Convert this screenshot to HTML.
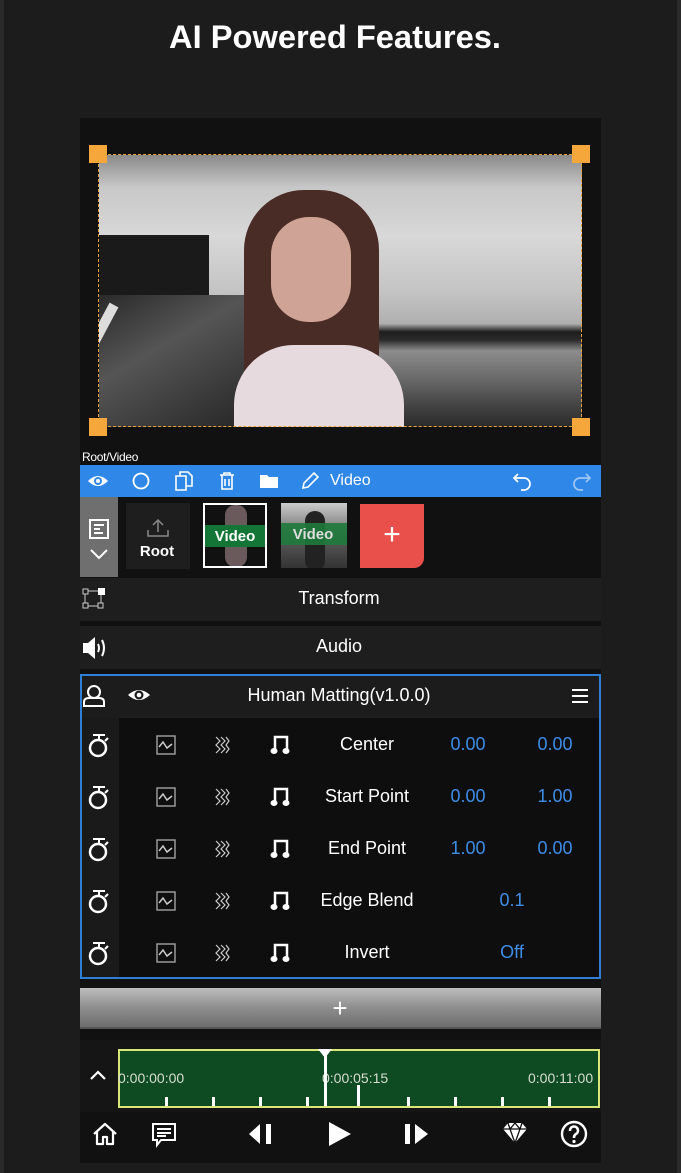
<!DOCTYPE html>
<html><head><meta charset="utf-8"><style>
*{margin:0;padding:0;box-sizing:border-box}
body{width:681px;height:1173px;background:#1c1c1c;position:relative;overflow:hidden;font-family:"Liberation Sans",sans-serif;color:#fff}
.a{position:absolute}
.t{position:absolute;white-space:nowrap}
.c{transform:translateX(-50%)}
svg{position:absolute;overflow:visible}
.blue{color:#3d8de6}
</style></head><body>
<div class="a" style="left:0;top:0;width:4px;height:1173px;background:#2a2a2a"></div>
<div class="a" style="right:0;top:0;width:4px;height:1173px;background:#2a2a2a"></div>
<div class="t c" style="left:335px;top:19px;font-size:32px;font-weight:bold;transform:translateX(-50%) scaleX(1.02)">AI Powered Features.</div>

<!-- app panel -->
<div class="a" style="left:80px;top:118px;width:521px;height:1045px;background:#111"></div>

<!-- photo -->
<div class="a" style="left:99px;top:155px;width:483px;height:272px;overflow:hidden;background:linear-gradient(#8a8a8a 0%,#c8c8c8 12%,#d8d8d8 30%,#c4c4c4 50%,#b0b0b0 62%,#1e1e1e 65%,#2a2a2a 68%,#8c8c8c 72%,#6a6a6a 82%,#444 92%,#2a2a2a 100%)">
  <div class="a" style="left:0;top:80px;width:110px;height:70px;background:#1a1a1a"></div>
  <div class="a" style="left:0;top:140px;width:150px;height:132px;background:linear-gradient(150deg,#2a2a2a,#555 40%,#262626)"></div>
  <div class="a" style="left:10px;top:150px;width:10px;height:130px;background:#ddd;transform:rotate(28deg);transform-origin:top"></div>
  <div class="a" style="left:145px;top:35px;width:135px;height:210px;border-radius:60px 60px 25px 25px;background:#4a2c26"></div>
  <div class="a" style="left:172px;top:62px;width:80px;height:105px;border-radius:38px;background:#cfa395"></div>
  <div class="a" style="left:135px;top:190px;width:170px;height:100px;border-radius:60px 60px 0 0;background:#e6dadf"></div>
</div>
<div class="a" style="left:98px;top:154px;width:484px;height:273px;border:1px dashed #e8a23a"></div>
<div class="a" style="left:89px;top:145px;width:18px;height:18px;background:#f5a73c"></div>
<div class="a" style="left:572px;top:145px;width:18px;height:18px;background:#f5a73c"></div>
<div class="a" style="left:89px;top:418px;width:18px;height:18px;background:#f5a73c"></div>
<div class="a" style="left:572px;top:418px;width:18px;height:18px;background:#f5a73c"></div>

<div class="t" style="left:82px;top:450px;font-size:12px;letter-spacing:-0.3px">Root/Video</div>

<!-- blue toolbar -->
<div class="a" style="left:80px;top:465px;width:521px;height:32px;background:#2f87e8"></div>
<svg style="left:86px;top:471px" width="24" height="20" viewBox="0 0 24 20"><path d="M2 10Q12 0 22 10Q12 20 2 10Z" fill="#fff"/><circle cx="12" cy="10" r="4" fill="#2f87e8"/><circle cx="12" cy="10" r="2" fill="#fff"/></svg>
<svg style="left:132px;top:472px" width="18" height="18"><circle cx="9" cy="9" r="7.5" fill="none" stroke="#fff" stroke-width="1.8"/></svg>
<svg style="left:174px;top:470px" width="20" height="22"><path d="M2 6h10v14H2z M6 6V2h8l4 4v10h-6" fill="none" stroke="#fff" stroke-width="1.6"/></svg>
<svg style="left:218px;top:471px" width="18" height="20"><path d="M2 4h14 M6 4V2h6v2 M4 4v14h10V4 M7 8v7 M11 8v7" fill="none" stroke="#fff" stroke-width="1.6"/></svg>
<svg style="left:259px;top:473px" width="20" height="16"><path d="M1 2h7l2 2h9v11H1z" fill="#fff"/></svg>
<svg style="left:300px;top:471px" width="20" height="20"><path d="M3 17l1-5L14 2l4 4L8 16z" fill="none" stroke="#fff" stroke-width="1.6"/></svg>
<div class="t" style="left:330px;top:472px;font-size:16px">Video</div>
<svg style="left:512px;top:470px" width="22" height="22"><path d="M6 4L2 8l4 4 M2 8h10a6 6 0 0 1 0 12h-3" fill="none" stroke="#fff" stroke-width="1.7"/></svg>
<svg style="left:570px;top:470px" width="22" height="22"><path d="M16 4l4 4-4 4 M20 8H10a6 6 0 0 0 0 12h3" fill="none" stroke="#9cc6f3" stroke-width="1.7"/></svg>

<!-- clip row -->
<div class="a" style="left:80px;top:497px;width:38px;height:80px;background:#6f6f6f"></div>
<svg style="left:89px;top:519px" width="20" height="20"><rect x="1" y="1" width="18" height="18" fill="none" stroke="#fff" stroke-width="2"/><path d="M5 6h10M5 10h6M5 14h9" stroke="#fff" stroke-width="2"/></svg>
<svg style="left:89px;top:548px" width="20" height="12"><path d="M2 2l8 8 8-8" fill="none" stroke="#fff" stroke-width="2"/></svg>
<div class="a" style="left:126px;top:503px;width:64px;height:66px;background:#1e1e1e"></div>
<svg style="left:146px;top:518px" width="24" height="20"><path d="M12 14V2 M7 7l5-5 5 5 M2 12v6h20v-6" fill="none" stroke="#888" stroke-width="1.5"/></svg>
<div class="t c" style="left:157px;top:543px;font-size:15px;font-weight:bold">Root</div>
<div class="a" style="left:203px;top:503px;width:64px;height:65px;border:2px solid #fff;background:#111;overflow:hidden">
  <div class="a" style="left:20px;top:0;width:22px;height:62px;border-radius:10px;background:#6a5a5c"></div>
  <div class="a" style="left:0;top:20px;width:62px;height:22px;background:#137636"></div>
  <div class="t c" style="left:30px;top:23px;font-size:15px;font-weight:bold">Video</div>
</div>
<div class="a" style="left:281px;top:503px;width:66px;height:65px;background:linear-gradient(#ccc,#555 60%,#333);overflow:hidden">
  <div class="a" style="left:24px;top:8px;width:20px;height:60px;border-radius:10px;background:#222"></div>
  <div class="a" style="left:0;top:20px;width:66px;height:22px;background:#1e7a3c;opacity:.9"></div>
  <div class="t c" style="left:32px;top:23px;font-size:15px;font-weight:bold;color:#ddd">Video</div>
</div>
<div class="a" style="left:360px;top:504px;width:64px;height:64px;background:#e9504c;border-radius:0 0 10px 0"></div>
<div class="t c" style="left:392px;top:518px;font-size:30px;font-weight:300">+</div>

<!-- transform / audio -->
<div class="a" style="left:80px;top:578px;width:521px;height:43px;background:#1e1e1e"></div>
<svg style="left:82px;top:587px" width="24" height="24"><rect x="16" y="1" width="7" height="7" fill="#fff"/><rect x="1" y="2" width="5" height="5" fill="none" stroke="#ccc"/><rect x="1" y="16" width="5" height="5" fill="none" stroke="#ccc"/><rect x="16" y="16" width="5" height="5" fill="none" stroke="#ccc"/><path d="M6 4h10M3 7v9M19 8v8M6 19h10" stroke="#ccc"/></svg>
<div class="t c" style="left:339px;top:588px;font-size:18px">Transform</div>
<div class="a" style="left:80px;top:626px;width:521px;height:43px;background:#1e1e1e"></div>
<svg style="left:82px;top:636px" width="26" height="24"><path d="M1 7h5l7-6v22l-7-6H1z" fill="#fff"/><path d="M16 8q2 4 0 8 M20 4q4 8 0 16" fill="none" stroke="#fff" stroke-width="2"/></svg>
<div class="t c" style="left:339px;top:636px;font-size:18px">Audio</div>

<!-- human matting -->
<div class="a" style="left:80px;top:674px;width:521px;height:305px;border:2px solid #2f7fd6;background:#0e0e0e"></div>
<div class="a" style="left:82px;top:676px;width:517px;height:42px;background:#1c1c1c"></div>
<div class="a" style="left:82px;top:718px;width:37px;height:259px;background:#1a1a1a"></div>
<svg style="left:82px;top:684px" width="24" height="24"><circle cx="12" cy="8" r="6" fill="none" stroke="#fff" stroke-width="2"/><path d="M2 22v-4q0-4 5-4h10q5 0 5 4v4z" fill="none" stroke="#fff" stroke-width="2"/></svg>
<svg style="left:126px;top:686px" width="26" height="18"><path d="M2 9Q13 -1 24 9Q13 19 2 9Z" fill="#fff"/><circle cx="13" cy="9" r="4.5" fill="#1c1c1c"/><circle cx="13" cy="9" r="2.3" fill="#fff"/></svg>
<div class="t c" style="left:339px;top:685px;font-size:18px">Human Matting(v1.0.0)</div>
<svg style="left:571px;top:688px" width="18" height="16"><path d="M1 2h16M1 8h16M1 14h16" stroke="#fff" stroke-width="2"/></svg>

<svg style="left:88px;top:733px" width="22" height="26"><path d="M5 2h12 M11 3v3" stroke="#fff" stroke-width="2"/><circle cx="10" cy="15" r="8" fill="none" stroke="#fff" stroke-width="2.5"/><path d="M17 8l3-3" stroke="#fff" stroke-width="2"/></svg>
<svg style="left:156px;top:735px" width="20" height="20"><rect x="1" y="1" width="18" height="18" fill="none" stroke="#999" stroke-width="1.5"/><path d="M3 12l4-5 4 6 5-4" fill="none" stroke="#ccc" stroke-width="1.5"/></svg>
<svg style="left:214px;top:735px" width="16" height="20"><path d="M2 2l4 4-4 4 4 4-4 4 M7 2l4 4-4 4 4 4-4 4 M12 2l3 4-3 4 3 4-3 4" fill="none" stroke="#ccc" stroke-width="1.2"/></svg>
<svg style="left:270px;top:734px" width="20" height="22"><path d="M5 17V3h12v14" fill="none" stroke="#fff" stroke-width="2.5"/><ellipse cx="4" cy="17" rx="3.5" ry="3" fill="#fff"/><ellipse cx="16" cy="17" rx="3.5" ry="3" fill="#fff"/></svg>
<div class="t c" style="left:367px;top:734px;font-size:18px">Center</div>
<div class="t c blue" style="left:468px;top:734px;font-size:18px">0.00</div>
<div class="t c blue" style="left:555px;top:734px;font-size:18px">0.00</div>

<svg style="left:88px;top:785px" width="22" height="26"><path d="M5 2h12 M11 3v3" stroke="#fff" stroke-width="2"/><circle cx="10" cy="15" r="8" fill="none" stroke="#fff" stroke-width="2.5"/><path d="M17 8l3-3" stroke="#fff" stroke-width="2"/></svg>
<svg style="left:156px;top:787px" width="20" height="20"><rect x="1" y="1" width="18" height="18" fill="none" stroke="#999" stroke-width="1.5"/><path d="M3 12l4-5 4 6 5-4" fill="none" stroke="#ccc" stroke-width="1.5"/></svg>
<svg style="left:214px;top:787px" width="16" height="20"><path d="M2 2l4 4-4 4 4 4-4 4 M7 2l4 4-4 4 4 4-4 4 M12 2l3 4-3 4 3 4-3 4" fill="none" stroke="#ccc" stroke-width="1.2"/></svg>
<svg style="left:270px;top:786px" width="20" height="22"><path d="M5 17V3h12v14" fill="none" stroke="#fff" stroke-width="2.5"/><ellipse cx="4" cy="17" rx="3.5" ry="3" fill="#fff"/><ellipse cx="16" cy="17" rx="3.5" ry="3" fill="#fff"/></svg>
<div class="t c" style="left:367px;top:786px;font-size:18px">Start Point</div>
<div class="t c blue" style="left:468px;top:786px;font-size:18px">0.00</div>
<div class="t c blue" style="left:555px;top:786px;font-size:18px">1.00</div>

<svg style="left:88px;top:837px" width="22" height="26"><path d="M5 2h12 M11 3v3" stroke="#fff" stroke-width="2"/><circle cx="10" cy="15" r="8" fill="none" stroke="#fff" stroke-width="2.5"/><path d="M17 8l3-3" stroke="#fff" stroke-width="2"/></svg>
<svg style="left:156px;top:839px" width="20" height="20"><rect x="1" y="1" width="18" height="18" fill="none" stroke="#999" stroke-width="1.5"/><path d="M3 12l4-5 4 6 5-4" fill="none" stroke="#ccc" stroke-width="1.5"/></svg>
<svg style="left:214px;top:839px" width="16" height="20"><path d="M2 2l4 4-4 4 4 4-4 4 M7 2l4 4-4 4 4 4-4 4 M12 2l3 4-3 4 3 4-3 4" fill="none" stroke="#ccc" stroke-width="1.2"/></svg>
<svg style="left:270px;top:838px" width="20" height="22"><path d="M5 17V3h12v14" fill="none" stroke="#fff" stroke-width="2.5"/><ellipse cx="4" cy="17" rx="3.5" ry="3" fill="#fff"/><ellipse cx="16" cy="17" rx="3.5" ry="3" fill="#fff"/></svg>
<div class="t c" style="left:367px;top:838px;font-size:18px">End Point</div>
<div class="t c blue" style="left:468px;top:838px;font-size:18px">1.00</div>
<div class="t c blue" style="left:555px;top:838px;font-size:18px">0.00</div>

<svg style="left:88px;top:889px" width="22" height="26"><path d="M5 2h12 M11 3v3" stroke="#fff" stroke-width="2"/><circle cx="10" cy="15" r="8" fill="none" stroke="#fff" stroke-width="2.5"/><path d="M17 8l3-3" stroke="#fff" stroke-width="2"/></svg>
<svg style="left:156px;top:891px" width="20" height="20"><rect x="1" y="1" width="18" height="18" fill="none" stroke="#999" stroke-width="1.5"/><path d="M3 12l4-5 4 6 5-4" fill="none" stroke="#ccc" stroke-width="1.5"/></svg>
<svg style="left:214px;top:891px" width="16" height="20"><path d="M2 2l4 4-4 4 4 4-4 4 M7 2l4 4-4 4 4 4-4 4 M12 2l3 4-3 4 3 4-3 4" fill="none" stroke="#ccc" stroke-width="1.2"/></svg>
<svg style="left:270px;top:890px" width="20" height="22"><path d="M5 17V3h12v14" fill="none" stroke="#fff" stroke-width="2.5"/><ellipse cx="4" cy="17" rx="3.5" ry="3" fill="#fff"/><ellipse cx="16" cy="17" rx="3.5" ry="3" fill="#fff"/></svg>
<div class="t c" style="left:367px;top:890px;font-size:18px">Edge Blend</div>
<div class="t c blue" style="left:512px;top:890px;font-size:18px">0.1</div>

<svg style="left:88px;top:941px" width="22" height="26"><path d="M5 2h12 M11 3v3" stroke="#fff" stroke-width="2"/><circle cx="10" cy="15" r="8" fill="none" stroke="#fff" stroke-width="2.5"/><path d="M17 8l3-3" stroke="#fff" stroke-width="2"/></svg>
<svg style="left:156px;top:943px" width="20" height="20"><rect x="1" y="1" width="18" height="18" fill="none" stroke="#999" stroke-width="1.5"/><path d="M3 12l4-5 4 6 5-4" fill="none" stroke="#ccc" stroke-width="1.5"/></svg>
<svg style="left:214px;top:943px" width="16" height="20"><path d="M2 2l4 4-4 4 4 4-4 4 M7 2l4 4-4 4 4 4-4 4 M12 2l3 4-3 4 3 4-3 4" fill="none" stroke="#ccc" stroke-width="1.2"/></svg>
<svg style="left:270px;top:942px" width="20" height="22"><path d="M5 17V3h12v14" fill="none" stroke="#fff" stroke-width="2.5"/><ellipse cx="4" cy="17" rx="3.5" ry="3" fill="#fff"/><ellipse cx="16" cy="17" rx="3.5" ry="3" fill="#fff"/></svg>
<div class="t c" style="left:367px;top:942px;font-size:18px">Invert</div>
<div class="t c blue" style="left:512px;top:942px;font-size:18px">Off</div>

<!-- plus bar -->
<div class="a" style="left:80px;top:988px;width:521px;height:41px;background:linear-gradient(#bdbdbd,#8e8e8e 50%,#6e6e6e);border-bottom:2px solid #555"></div>
<div class="t c" style="left:340px;top:993px;font-size:26px;font-weight:300">+</div>

<!-- timeline -->
<div class="a" style="left:80px;top:1040px;width:521px;height:72px;background:#151515"></div>
<svg style="left:89px;top:1069px" width="18" height="12"><path d="M2 10l7-7 7 7" fill="none" stroke="#fff" stroke-width="2.2"/></svg>
<div class="a" style="left:118px;top:1049px;width:482px;height:59px;background:#0e4a22;border:2px solid #d8e67a"></div>
<div class="t" style="left:118px;top:1070px;font-size:14px;color:#d7ddd0">0:00:00:00</div>
<div class="t" style="left:322px;top:1070px;font-size:14px;color:#d7ddd0">0:00:05:15</div>
<div class="t" style="left:528px;top:1070px;font-size:14px;color:#d7ddd0">0:00:11:00</div>
<div class="a" style="left:324px;top:1050px;width:3px;height:56px;background:#fff"></div>
<svg style="left:318px;top:1049px" width="14" height="10"><path d="M0 0h14L7 9z" fill="#fff"/></svg>
<div class="a" style="left:357px;top:1085px;width:3px;height:21px;background:#fff"></div>
<div class="a" style="left:165px;top:1097px;width:3px;height:9px;background:#fff"></div>
<div class="a" style="left:212px;top:1097px;width:3px;height:9px;background:#fff"></div>
<div class="a" style="left:259px;top:1097px;width:3px;height:9px;background:#fff"></div>
<div class="a" style="left:306px;top:1097px;width:3px;height:9px;background:#fff"></div>
<div class="a" style="left:407px;top:1097px;width:3px;height:9px;background:#fff"></div>
<div class="a" style="left:454px;top:1097px;width:3px;height:9px;background:#fff"></div>
<div class="a" style="left:501px;top:1097px;width:3px;height:9px;background:#fff"></div>
<div class="a" style="left:548px;top:1097px;width:3px;height:9px;background:#fff"></div>

<!-- bottom bar -->
<svg style="left:92px;top:1121px" width="26" height="26"><path d="M2 13L13 3l11 10 M5 11v12h6v-7h4v7h6V11" fill="none" stroke="#fff" stroke-width="2.2" stroke-linejoin="round"/></svg>
<svg style="left:151px;top:1122px" width="26" height="26"><path d="M2 2h22v16H10l-4 5v-5H2z" fill="none" stroke="#fff" stroke-width="2"/><path d="M6 7h14M6 11h14M6 14h9" stroke="#fff" stroke-width="2"/></svg>
<svg style="left:247px;top:1122px" width="30" height="24"><path d="M2 12L13 2v20z" fill="#fff"/><rect x="19" y="2" width="5" height="20" fill="#fff"/></svg>
<svg style="left:327px;top:1120px" width="26" height="28"><path d="M2 2l22 12L2 26z" fill="#fff"/></svg>
<svg style="left:403px;top:1122px" width="30" height="24"><rect x="2" y="2" width="5" height="20" fill="#fff"/><path d="M12 2l13 10-13 10z" fill="#fff"/></svg>
<svg style="left:502px;top:1122px" width="26" height="22"><path d="M1 7l5-6h14l5 6-12 14z" fill="#fff"/><path d="M1 7h24M8 7l5 14 5-14M6 1l2 6 5-6 5 6 2-6" fill="none" stroke="#111" stroke-width="1.3"/></svg>
<svg style="left:560px;top:1120px" width="28" height="28"><circle cx="14" cy="14" r="12" fill="none" stroke="#fff" stroke-width="2.4"/><path d="M10 11a4 4 0 1 1 6 3q-2 1-2 4" fill="none" stroke="#fff" stroke-width="2.6"/><circle cx="14" cy="21.5" r="1.6" fill="#fff"/></svg>
</body></html>
